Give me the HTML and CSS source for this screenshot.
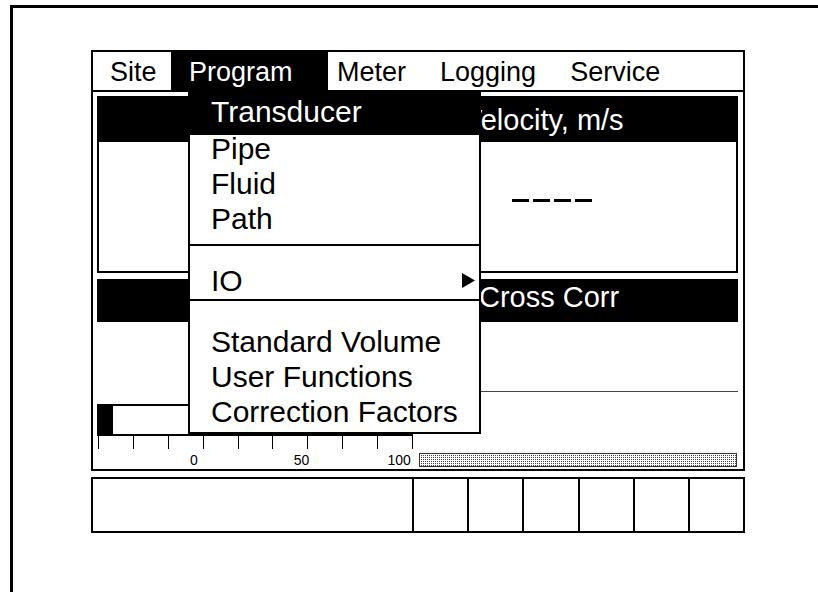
FILE: index.html
```html
<!DOCTYPE html>
<html lang="en">
     <head>
          <meta charset="UTF-8" />
          <meta name="viewport" content="width=device-width, initial-scale=1.0" />
          <title>Program Menu</title>
          <link rel="stylesheet" href="styles.css">
     </head>
     <body>
          <div class="device">
               <div class="screen">
                    <div class="menubar">
                         <span class="menu-item site">Site</span>
                         <span class="menu-item program">Program</span>
                         <span class="menu-item meter">Meter</span>
                         <span class="menu-item spaced">Logging</span>
                         <span class="menu-item spaced">Service</span>
                    </div>

                    <div class="panel panel-top">
                         <div class="panel-head vel">Velocity, m/s</div>
                         <div class="panel-body">
                              <div class="dashes"><span></span><span></span><span></span><span></span></div>
                         </div>
                    </div>

                    <div class="panel-bottom">
                         <div class="panel-head corr">Cross Corr</div>
                         <div class="p2-body">
                              <div class="rule"></div>
                              <div class="gauge-row">
                                   <div class="gauge">
                                        <div class="bar"><div class="bar-fill"></div></div>
                                        <div class="ticks">
                                             <span></span><span></span><span></span><span></span><span></span>
                                             <span></span><span></span><span></span><span></span><span></span>
                                        </div>
                                        <div class="labels">
                                             <span class="l0">0</span>
                                             <span class="l50">50</span>
                                             <span class="l100">100</span>
                                        </div>
                                   </div>
                                   <div class="stipple"></div>
                              </div>
                         </div>
                    </div>

                    <!-- open Program menu -->
                    <div class="dropdown">
                         <div class="item active">Transducer</div>
                         <div class="group first">
                              <div class="item">Pipe</div>
                              <div class="item">Fluid</div>
                              <div class="item">Path</div>
                         </div>
                         <div class="sep"></div>
                         <div class="group io">
                              <div class="item sub">
                                   <span>IO</span>
                                   <svg width="13" height="15" viewBox="0 0 13 15"><polygon points="0,0 13,7.5 0,15" fill="#000" /></svg>
                              </div>
                         </div>
                         <div class="sep sep2"></div>
                         <div class="group last">
                              <div class="item">Standard Volume</div>
                              <div class="item">User Functions</div>
                              <div class="item">Correction Factors</div>
                         </div>
                    </div>
               </div>

               <div class="softkeys">
                    <div></div><div></div><div></div><div></div><div></div><div></div><div></div>
               </div>
          </div>
     </body>
</html>
```

FILE: styles.css
```css
* {
     padding: 0;
     margin: 0;
     box-sizing: border-box;
}
html, body {
     background: #fff;
     overflow: hidden;
}
body {
     font-family: "Liberation Sans", Arial, sans-serif;
     color: #000;
}
.device {
     margin: 5px 0 0 10px;
     height: 587px;
     border-top: 3px solid #000;
     border-left: 3px solid #000;
     padding: 42px 0 0 78px;
}
.screen {
     position: relative;
     width: 654px;
     border: 2px solid #000;
}

/* menu bar */
.menubar {
     display: flex;
     border-bottom: 2px solid #000;
     font-size: 27px;
}
.menu-item {
     padding-top: 3px;
     line-height: 35px;
     white-space: nowrap;
}
.site {
     width: 78px;
     padding-left: 17px;
}
.program {
     width: 157px;
     padding-left: 18px;
     background: #000;
     color: #fff;
}
.meter {
     padding-left: 9px;
}
.spaced {
     margin-left: 34px;
}

/* panels */
.panel-head {
     background: #000;
     color: #fff;
     font-size: 29px;
     white-space: nowrap;
}
.panel-top {
     margin: 4px 5px 0 4px;
     border: 2px solid #000;
}
.vel {
     height: 44px;
     line-height: 44px;
     padding-left: 364px;
}
.panel-body {
     height: 129px;
}
.dashes {
     display: flex;
     gap: 4px;
     padding: 57px 0 0 413px;
}
.dashes span {
     width: 17px;
     height: 3px;
     background: #000;
}
.panel-bottom {
     margin: 6px 5px 0 4px;
}
.corr {
     height: 43px;
     line-height: 36px;
     padding-left: 382px;
}
.p2-body {
     padding-bottom: 1px;
}
.rule {
     margin: 69px 0 0 323px;
     border-top: 1px solid #444;
}
.gauge-row {
     display: flex;
}
.gauge {
     width: 316px;
}
.bar {
     margin-top: 12px;
     height: 32px;
     border: 2px solid #000;
     border-left: none;
}
.bar-fill {
     width: 16px;
     height: 100%;
     background: #000;
}
.ticks {
     display: flex;
     justify-content: space-between;
     padding-left: 1px;
}
.ticks span {
     width: 1px;
     height: 13px;
     background: #000;
}
.labels {
     display: flex;
     margin-top: 3px;
     font-size: 14px;
     line-height: 16px;
}
.l0 {
     margin-left: 93px;
}
.l50 {
     margin-left: 96px;
}
.l100 {
     margin-left: 78px;
}
.stipple {
     margin: 61px 0 0 6px;
     width: 318px;
     height: 14px;
     border: 1px solid #333;
     background:
          linear-gradient(90deg, #fff 1px, transparent 1px) 0 0 / 2px 2px,
          linear-gradient(#fff 1px, transparent 1px) 0 0 / 2px 2px,
          #444;
}

/* dropdown menu */
.dropdown {
     position: absolute;
     left: 95px;
     top: 40px;
     width: 293px;
     background: #fff;
     border: 2px solid #000;
     border-top: none;
     font-size: 30px;
     padding-bottom: 3px;
}
.item {
     line-height: 35px;
     padding-left: 21px;
     white-space: nowrap;
}
.item.active {
     line-height: 39px;
     padding-bottom: 4px;
     background: #000;
     color: #fff;
}
.group.first {
     margin-top: -4px;
     margin-bottom: 8px;
}
.sep {
     height: 2px;
     background: #000;
}
.sep2 {
     margin-top: 1px;
}
.group.io {
     padding-top: 17px;
}
.item.sub {
     display: flex;
     justify-content: space-between;
     align-items: center;
     padding-right: 4px;
}
.group.last {
     padding-top: 23px;
}

/* soft keys */
.softkeys {
     margin-top: 6px;
     width: 654px;
     height: 56px;
     border: 2px solid #000;
     display: grid;
     grid-template-columns: 319px repeat(6, 1fr);
}
.softkeys div + div {
     border-left: 2px solid #000;
}
```
